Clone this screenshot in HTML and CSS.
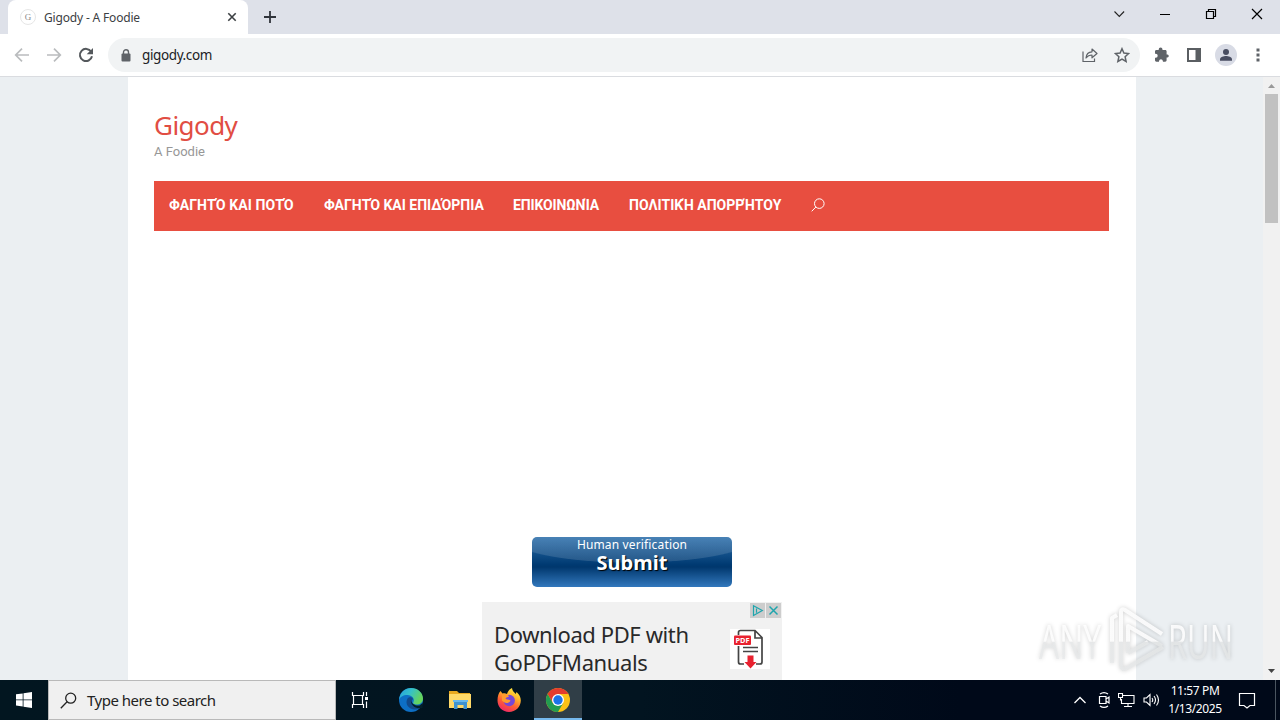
FILE: index.html
```html
<!DOCTYPE html>
<html lang="en">
<head>
    <meta charset="UTF-8">
    <meta name="viewport" content="width=device-width, initial-scale=1.0">
    <title>Gigody - A Foodie</title>
    <link rel="stylesheet" href="styles.css">
</head>
<body>
    <div class="tabstrip">
        <div class="tab">
            <span class="favicon">G</span>
            <span class="tab-title">Gigody - A Foodie</span>
            <svg class="tab-close" width="10" height="10" viewBox="0 0 10 10"><path d="M1.3 1.3l7.4 7.4M8.7 1.3L1.3 8.7" stroke="#3c4043" stroke-width="1.6"/></svg>
        </div>
        <svg class="new-tab" width="14" height="14" viewBox="0 0 14 14"><path d="M7 1v12M1 7h12" stroke="#30343b" stroke-width="1.8"/></svg>
        <div class="window-buttons">
            <svg width="46" height="28" viewBox="0 0 46 28"><path d="M18.500 11.500l4.800 5 4.800-5" fill="none" stroke="#222" stroke-width="1.1"/></svg>
            <svg width="46" height="28" viewBox="0 0 46 28"><path d="M18 14.500h10" stroke="#000"/></svg>
            <svg width="46" height="28" viewBox="0 0 46 28"><path d="M18.500 11.500h7v7h-7zM20.500 11.500v-2h7v7h-2" fill="none" stroke="#000" stroke-width="1.2"/></svg>
            <svg width="46" height="28" viewBox="0 0 46 28"><path d="M18 9l10 10M28 9L18 19" stroke="#000" stroke-width="1.2"/></svg>
        </div>
    </div>

    <div class="toolbar">
        <div class="nav-buttons">
            <svg width="16" height="16" viewBox="0 0 16 16"><path d="M15 8H2M8 1.700L1.700 8 8 14.300" fill="none" stroke="#babcbe" stroke-width="1.7"/></svg>
            <svg width="16" height="16" viewBox="0 0 16 16"><path d="M1 8h13M8 1.700L14.300 8 8 14.300" fill="none" stroke="#babcbe" stroke-width="1.7"/></svg>
            <svg width="16" height="16" viewBox="0 0 16 16"><path d="M13.200 4.700A6.100 6.100 0 1 0 14 9.300" fill="none" stroke="#54585c" stroke-width="2"/><path d="M15 1v6.300H8.700z" fill="#54585c"/></svg>
        </div>
        <div class="address">
            <svg width="10" height="13" viewBox="0 0 10 13"><rect x="0.500" y="4.500" width="9" height="8" rx="1" fill="#5f6368"/><path d="M2.500 5V3.200a2.500 2.500 0 0 1 5 0V5" fill="none" stroke="#5f6368" stroke-width="1.4"/></svg>
            <span class="url">gigody.com</span>
            <svg class="share" width="16" height="16" viewBox="0 0 16 16"><path d="M1 4.500v10h11.500v-3" fill="none" stroke="#5f6368" stroke-width="1.200"/><path d="M4 11c.3-4 2.500-6 6-6.200V2L15 6.500l-5 4.300V8C7.500 8 5.500 9 4 11z" fill="none" stroke="#5f6368" stroke-width="1.200" stroke-linejoin="round"/></svg>
            <svg class="star" width="16" height="16" viewBox="0 0 16 16"><path d="M8 1.700l1.900 4.300 4.700.5-3.500 3.200 1 4.700L8 12l-4.100 2.400 1-4.700L1.400 6.500l4.700-.5z" fill="none" stroke="#5f6368" stroke-width="1.500"/></svg>
        </div>
        <div class="toolbar-icons">
            <svg width="16" height="16" viewBox="0 0 16 16"><path d="M13.500 7.400h-.9V4.300c0-.8-.6-1.400-1.400-1.400H8.500V2.400a1.900 1.900 0 0 0-3.800 0v.5H2.400c-.8 0-1.400.6-1.400 1.400v2.400h.7a2 2 0 0 1 0 4H1v2.600c0 .8.6 1.400 1.400 1.400H5v-.8a2 2 0 0 1 3.900 0v.8h2.300c.8 0 1.400-.6 1.400-1.400v-2.700h.9a1.650 1.650 0 0 0 0-3.200z" fill="#5f6368"/></svg>
            <svg width="16" height="16" viewBox="0 0 16 16"><path d="M1 1h14v14H1zM3 3v10h6.500V3z" fill="#5a5e62" fill-rule="evenodd"/></svg>
            <svg width="22" height="22" viewBox="0 0 22 22"><circle cx="11" cy="11" r="11" fill="#d8dbe5"/><circle cx="11" cy="7.900" r="3" fill="#484d61"/><path d="M5 16.800v-1.600c0-2.200 3.800-3.300 6-3.300s6 1.100 6 3.300v1.600z" fill="#484d61"/></svg>
            <svg width="4" height="14" viewBox="0 0 4 14"><path d="M.5.500h3v3h-3zM.5 5.500h3v3h-3zM.5 10.500h3v3h-3z" fill="#5f6368"/></svg>
        </div>
    </div>

    <div class="viewport">
        <div class="page">
            <h1 class="site-title">Gigody</h1>
            <p class="site-tagline">A Foodie</p>
            <nav class="menu">
                <a class="item-1">ΦΑΓΗΤΌ ΚΑΙ ΠΟΤΌ</a>
                <a class="item-2">ΦΑΓΗΤΌ ΚΑΙ ΕΠΙΔΌΡΠΙΑ</a>
                <a class="item-3">ΕΠΙΚΟΙΝΩΝΊΑ</a>
                <a class="item-4">ΠΟΛΙΤΙΚΉ ΑΠΟΡΡΉΤΟΥ</a>
                <svg width="14" height="14" viewBox="0 0 14 14"><circle cx="8.300" cy="5.600" r="4.800" fill="none" stroke="#fff"/><path d="M4.900 9L.7 13.300" stroke="#fff"/></svg>
            </nav>
            <div class="verify">
                <span class="verify-label">Human verification</span>
                <span class="verify-submit">Submit</span>
            </div>
            <div class="ad">
                <p class="ad-text">Download PDF with<br>GoPDFManuals</p>
                <svg class="pdf" width="40" height="40" viewBox="0 0 40 40">
                    <rect width="40" height="40" fill="#fff"/>
                    <path d="M8.500 6V3.500a2 2 0 0 1 2-2H25l7 7V33a2 2 0 0 1-2 2h-4M14 35h-3.500a2 2 0 0 1-2-2V17M25 2v7h7" fill="none" stroke="#444" stroke-width="1.700"/>
                    <rect x="4" y="6.500" width="17" height="9.500" rx="1" fill="#e8212f"/>
                    <text x="5.500" y="14" textLength="14" lengthAdjust="spacingAndGlyphs" class="pdf-label">PDF</text>
                    <path d="M13 18.500h15M13 22.500h15" stroke="#444" stroke-width="1.500"/>
                    <path d="M17.500 26.500h6V33h3L20.500 39.500 14.500 33h3z" fill="#e8212f"/>
                </svg>
                <div class="ad-choices">
                    <svg width="15" height="15" viewBox="0 0 15 15"><path d="M3.500 2.700L12.300 7.600l-8.800 4.900zM6.500 5.500v4.300" fill="none" stroke="#1fa5ad" stroke-width="1.200"/></svg>
                    <svg width="15" height="15" viewBox="0 0 15 15"><path d="M3.500 3.500l8 8M11.500 3.500l-8 8" stroke="#1fa5ad" stroke-width="1.500"/></svg>
                </div>
            </div>
        </div>
        <div class="scrollbar">
            <svg width="7" height="4" viewBox="0 0 7 4"><path d="M0 4L3.500 0 7 4z" fill="#999"/></svg>
            <div class="thumb"></div>
            <svg class="down" width="7" height="4" viewBox="0 0 7 4"><path d="M0 0l3.500 4L7 0z" fill="#444"/></svg>
        </div>
        <svg class="watermark" width="210" height="76" viewBox="0 0 210 76">
            <defs>
                <linearGradient id="fade" x1="0" y1="0" x2="0" y2="76" gradientUnits="userSpaceOnUse"><stop offset=".5" stop-color="#fff" stop-opacity=".85"/><stop offset=".52" stop-color="#e6e8e9" stop-opacity=".75"/></linearGradient>
            </defs>
            <text x="8" y="56" textLength="62" lengthAdjust="spacingAndGlyphs">ANY</text>
            <text x="137" y="56" textLength="65" lengthAdjust="spacingAndGlyphs">RUN</text>
            <g class="play">
                <path d="M81 60V15l5-3M90 63V9q0-4 4-2l37 24M97 50V23l34 20M90 63q1 5 6 2l36-21M97 50l20-11"/>
            </g>
        </svg>
    </div>

    <div class="taskbar">
        <div class="start">
            <svg width="16" height="16" viewBox="0 0 16 16"><path d="M0 2.300l6.700-.9v6.100H0zM7.500 1.300L16 0v7.500H7.500zM0 8.300h6.700v6.200L0 13.600zM7.500 8.300H16V16l-8.500-1.300z" fill="#fff"/></svg>
        </div>
        <div class="search">
            <svg width="17" height="17" viewBox="0 0 17 17"><circle cx="10.700" cy="6.200" r="5" fill="none" stroke="#222" stroke-width="1.300"/><path d="M7.100 9.800L.8 16.200" stroke="#222" stroke-width="1.300"/></svg>
            <span>Type here to search</span>
        </div>
        <div class="apps">
            <div class="app">
                <svg width="18" height="18" viewBox="0 0 18 18"><path d="M1.500 1v3.500h11V1M1.500 17v-3.500h11V17M2.500 4.500h9v9h-9zM15.500 1v4M15.500 10.500V17" fill="none" stroke="#fff" stroke-width="1.200"/><path d="M14 6h3v3h-3z" fill="#fff"/></svg>
            </div>
            <div class="app">
                <svg width="26" height="26" viewBox="0 0 26 26">
                    <defs>
                        <linearGradient id="edgeTop" x1="0" y1="0" x2="1" y2=".4"><stop offset="0" stop-color="#249ee0"/><stop offset=".5" stop-color="#35c1c9"/><stop offset="1" stop-color="#66d45b"/></linearGradient>
                    </defs>
                    <circle cx="13" cy="13" r="12" fill="#0d6fc5"/>
                    <path d="M1 13C2 5 7 1 13 1c7 0 12 5 12 10.500 0 4-3 6-6.500 6-3 0-4-1.300-3-2.700C17 12 14 8 9.500 8 5 8 2 10 1 13z" fill="url(#edgeTop)"/>
                    <path d="M9.500 11.500c-3 5 1 11 7.500 11 3 0 5-1.200 6.700-3C20 21 14 19 13.500 15c0-2 1.200-2.200 1.500-3-.5-2-4-2.500-5.500-.5z" fill="#114a8b"/>
                    <path d="M13 12.500c0 4 4 6.500 8.500 6l3-2.500v5l-2 .2C17 22 12 17.500 13 12.500z" fill="#03202b"/>
                </svg>
            </div>
            <div class="app">
                <svg width="24" height="22" viewBox="0 0 24 22"><path d="M1 2h8l2 2h11v15H1z" fill="#e9a91f"/><path d="M1 5h22v14H1z" fill="#ffd968"/><path d="M6 12h13v8h-3.500v-4h-6v4H6z" fill="#3f93d0"/><path d="M5 11h15v2H5z" fill="#69b9ec"/></svg>
            </div>
            <div class="app">
                <svg width="26" height="26" viewBox="0 0 26 26">
                    <defs>
                        <linearGradient id="fox" x1=".8" y1="0" x2=".3" y2="1"><stop offset="0" stop-color="#fff044"/><stop offset=".35" stop-color="#ffb52a"/><stop offset=".65" stop-color="#ff6033"/><stop offset="1" stop-color="#ee2668"/></linearGradient>
                    </defs>
                    <path d="M4.500 4l2 2.500c1.500-.5 3-.4 4.500.5 1-3 2.500-5 5-6 .2 3 2.300 4 3.800 6l.7-2c3 2.500 4.300 5.500 4.300 8.500C24.800 20 19.500 25 13 25S1.500 20 1.500 13.500C1.500 9.500 2.500 6 4.500 4z" fill="url(#fox)"/>
                    <circle cx="13.200" cy="13.500" r="5.700" fill="#7747d6"/>
                    <path d="M6 8c3-2 6-1 7 1.500-1 1-3 .5-3.500 2 1 1.700 4 .7 5 2-1 3-6 3.500-8.500 0z" fill="#ff9b2d"/>
                </svg>
            </div>
            <div class="app active">
                <svg width="26" height="26" viewBox="0 0 26 26">
                    <circle cx="13" cy="13" r="12" fill="#fbc116"/>
                    <path d="M2.600 7A12 12 0 0 1 23.400 7H13L7.800 16z" fill="#e33b2e"/>
                    <path d="M2.600 7A12 12 0 0 0 13 25l5.200-9L13 18l-5.200-2z" fill="#229c50"/>
                    <circle cx="13" cy="13" r="6" fill="#fff"/><circle cx="13" cy="13" r="4.700" fill="#1a73e8"/>
                </svg>
            </div>
        </div>
        <div class="tray">
            <svg width="14" height="8" viewBox="0 0 14 8"><path d="M1.500 7L7 1.500 12.500 7" fill="none" stroke="#fff" stroke-width="1.300"/></svg>
            <svg width="12" height="18" viewBox="0 0 12 18"><path d="M1.500 5.500h6.500v7H1.500zM8 8l3-2v6L8 10M2 3q4-2.800 8 0M2 15q4 2.800 8 0" fill="none" stroke="#fff" stroke-width="1.200"/></svg>
            <svg width="17" height="16" viewBox="0 0 17 16"><path d="M5 3.500h11v8H3.500V7M10 11.500v3M6 14.500h8M.5 1.500h4v4h-4zM2.500 5.500v3" fill="none" stroke="#fff" stroke-width="1.100"/></svg>
            <svg width="17" height="14" viewBox="0 0 17 14"><path d="M1 5h2.500L7 1.500v11L3.500 9H1zM9 5q1.500 2 0 4M11 3q3 4 0 8M13.500 1.500q4 5.500 0 11" fill="none" stroke="#fff" stroke-width="1.100"/></svg>
            <div class="clock"><span class="time">11:57 PM</span><span class="date">1/13/2025</span></div>
            <svg class="notify" width="18" height="17" viewBox="0 0 18 17"><path d="M1.500 1.500h15v12h-4.500L9 16l-3-2.500H1.500z" fill="none" stroke="#fff" stroke-width="1.200"/></svg>
            <div class="show-desktop"></div>
        </div>
    </div>
</body>
</html>
```
FILE: styles.css
```css
* {
    box-sizing: border-box;
}
body {
    margin: 0;
    width: 1280px;
    height: 720px;
    overflow: hidden;
    background: #fff;
    font-family: "Noto Sans", "Open Sans", sans-serif;
}
svg {
    display: block;
    flex: none;
}
span, a {
    white-space: nowrap;
}
.tabstrip {
    display: flex;
    height: 34px;
    background: #dee1e9;
}
.tab {
    display: flex;
    align-items: center;
    width: 240px;
    margin-left: 8px;
    padding: 0 11px 0 12px;
    background: #fff;
    border-radius: 8px 8px 0 0;
}
.favicon {
    width: 16px;
    height: 16px;
    border: 1px solid #e6e6e6;
    border-radius: 50%;
    color: #888;
    font: 9px/15px "Liberation Serif", serif;
    text-align: center;
}
.tab-title {
    flex: 1;
    margin-left: 8px;
    color: #3c4043;
    font-size: 12px;
    letter-spacing: -0.17px;
}
.new-tab {
    margin: 10px 0 0 15px;
}
.window-buttons {
    display: flex;
    margin-left: auto;
}
.toolbar {
    display: flex;
    align-items: center;
    height: 43px;
    border-bottom: 1px solid #dadce0;
}
.nav-buttons {
    display: flex;
    gap: 16px;
    margin: 0 14px;
}
.address {
    display: flex;
    align-items: center;
    width: 1032px;
    height: 34px;
    padding: 0 10px 0 13px;
    border-radius: 17px;
    background: #f1f3f4;
}
.url {
    flex: 1;
    margin-left: 11px;
    color: #202124;
    font-size: 13.5px;
    letter-spacing: -0.38px;
}
.star {
    margin-left: 16px;
}
.toolbar-icons {
    display: flex;
    align-items: center;
    margin-left: 14px;
    gap: 16px;
}
.toolbar-icons svg:nth-child(3) {
    margin: 0 3px 0 -3px;
}
.viewport {
    position: relative;
    display: flex;
    height: 603px;
    padding-left: 128px;
    background: #ebeff2;
    overflow: hidden;
}
.page {
    width: 1008px;
    padding: 30px 27px 0 26px;
    background: #fff;
}
.site-title {
    margin: 0;
    height: 36px;
    color: #e14d43;
    font: 26px/36px "Noto Sans", sans-serif;
    letter-spacing: -0.55px;
}
.site-tagline {
    margin: 0;
    height: 38px;
    color: #979797;
    font: 13px/18px Roboto, sans-serif;
}
.menu {
    display: flex;
    align-items: center;
    height: 50px;
    padding: 0 0 2px 15px;
    background: #e84e40;
}
.menu a {
    color: #fff;
    font-family: Roboto, sans-serif;
    font-size: 14px;
    font-weight: bold;
}
.menu svg {
    margin-left: -1px;
}
.item-1 {
    width: 155px;
    letter-spacing: 0.1px;
}
.item-2 {
    width: 189px;
}
.item-3 {
    width: 116px;
    letter-spacing: -0.15px;
}
.item-4 {
    width: 183px;
}
.verify {
    display: flex;
    flex-direction: column;
    align-items: center;
    width: 200px;
    height: 50px;
    margin: 306px 0 0 378px;
    border-radius: 5px;
    background: radial-gradient(ellipse 125px 26px at 50% 0, rgba(255, 255, 255, 0.13) 97%, transparent 100%), linear-gradient(#2d6fab, #003a72 55%, #00376d 60%, #3278bd);
    color: #fff;
}
.verify-label {
    height: 15px;
    font-size: 12px;
    line-height: 15px;
    letter-spacing: 0.15px;
}
.verify-submit {
    font-size: 20px;
    font-weight: bold;
    line-height: 22px;
    text-shadow: 1px 1px 1px #000;
}
.ad {
    position: relative;
    display: flex;
    width: 300px;
    height: 78px;
    margin: 15px 0 0 328px;
    padding-left: 12px;
    background: #f1f1f1;
}
.ad-text {
    width: 236px;
    margin: 18px 0 0;
    color: #292929;
    font: 22px/28px "Noto Sans", sans-serif;
    letter-spacing: -0.4px;
}
.pdf {
    margin-top: 27px;
}
.pdf-label {
    fill: #fff;
    font: bold 7px "Open Sans", sans-serif;
}
.ad-choices {
    position: absolute;
    top: 1px;
    right: 1px;
    display: flex;
    gap: 1px;
}
.ad-choices svg {
    background: #cdcdcd;
}
.scrollbar {
    display: flex;
    flex-direction: column;
    align-items: center;
    width: 17px;
    margin-left: auto;
    padding: 7px 0;
    background: #f1f1f1;
}
.thumb {
    width: 13px;
    height: 129px;
    margin-top: 6px;
    background: #c1c1c1;
}
.down {
    margin-top: auto;
}
.watermark {
    position: absolute;
    left: 1031px;
    top: 526px;
    filter: drop-shadow(0 0 2px rgba(0, 0, 0, 0.22));
}
.watermark text {
    fill: url(#fade);
    font: 47px "Open Sans", sans-serif;
}
.play path {
    fill: none;
    stroke: url(#fade);
    stroke-width: 4;
    stroke-linejoin: round;
}
.taskbar {
    display: flex;
    height: 40px;
    background: linear-gradient(90deg, #021620, #021420 50%, #000919 75%);
}
.start {
    display: flex;
    align-items: center;
    justify-content: center;
    width: 48px;
}
.search {
    display: flex;
    align-items: center;
    width: 288px;
    padding-left: 11px;
    border: 1px solid #b9b9b9;
    background: #f0f0f0;
}
.search span {
    margin-left: 10px;
    color: #222;
    font-size: 15px;
    letter-spacing: -0.5px;
}
.apps {
    display: flex;
    gap: 1px;
    margin-left: 2px;
}
.app {
    display: flex;
    align-items: center;
    justify-content: center;
    width: 48px;
}
.app:first-child {
    padding-right: 4px;
}
.active {
    padding-top: 2px;
    background: #303e47;
    border-bottom: 2px solid #76b9ed;
}
.tray {
    display: flex;
    align-items: center;
    margin-left: auto;
}
.tray > svg + svg {
    margin-left: 8px;
}
.tray > svg:nth-child(2) {
    margin-left: 11px;
}
.clock {
    display: flex;
    flex-direction: column;
    align-items: center;
    width: 54px;
    margin: 0 16px 0 8px;
    color: #fff;
    font-size: 12px;
    line-height: 18px;
    letter-spacing: -0.4px;
}
.show-desktop {
    width: 5px;
    height: 40px;
    margin-left: 19px;
    border-left: 1px solid #4a5560;
}
```
